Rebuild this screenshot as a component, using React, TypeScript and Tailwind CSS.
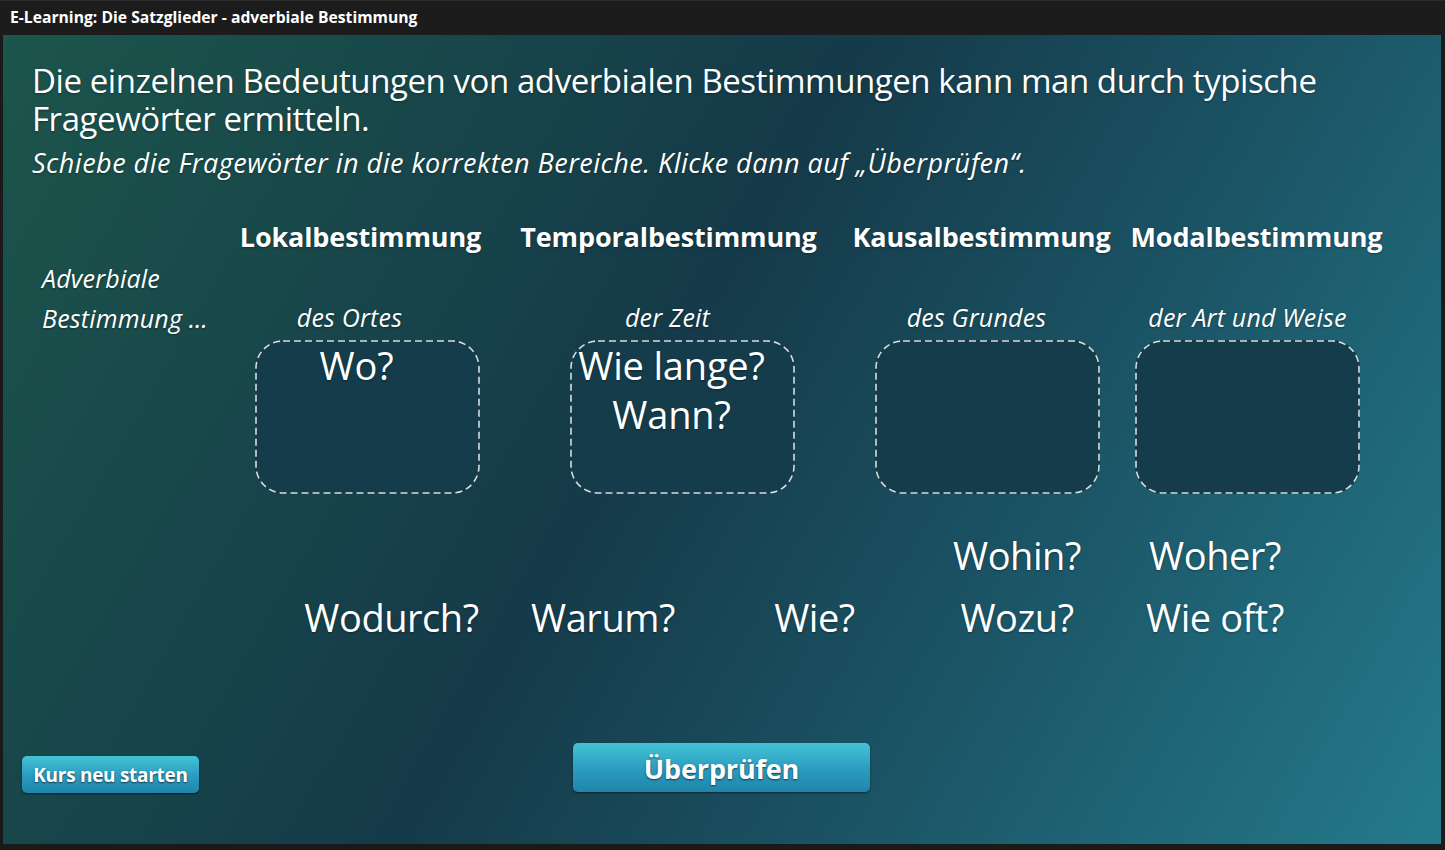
import React from 'react';

const columns = [
  { title: 'Lokalbestimmung', sub: 'des Ortes', words: ['Wo?'], hx: 'mr-[14px]', sx: 'mr-[36px]' },
  { title: 'Temporalbestimmung', sub: 'der Zeit', words: ['Wie lange?', 'Wann?'], hx: 'mr-[28px]', sx: 'mr-[30px]' },
  { title: 'Kausalbestimmung', sub: 'des Grundes', words: [], hx: 'mr-[12px]', sx: 'mr-[22px]' },
  { title: 'Modalbestimmung', sub: 'der Art und Weise', words: [], hx: 'ml-[18px]', sx: '' },
];

const looseTop = [
  { word: '', w: 'w-[207px]' },
  { word: '', w: 'w-[216px]' },
  { word: '', w: 'w-[207px]' },
  { word: 'Wohin?', w: 'w-[198px]' },
  { word: 'Woher?', w: 'w-[198px]' },
];

const looseBottom = [
  { word: 'Wodurch?', w: 'w-[207px]' },
  { word: 'Warum?', w: 'w-[216px]' },
  { word: 'Wie?', w: 'w-[207px]' },
  { word: 'Wozu?', w: 'w-[198px]' },
  { word: 'Wie oft?', w: 'w-[198px]' },
];

const font = "font-['Open_Sans','Noto_Sans',sans-serif]";
const shadow = '[text-shadow:0_1px_2px_rgba(0,0,0,0.35)]';

function WordRow({ items }: { items: { word: string; w: string }[] }) {
  return (
    <div className="flex pl-[285px] h-[62px] items-center">
      {items.map((it, i) => (
        <div key={i} className={`${it.w} text-center text-[38px] leading-[49px] tracking-[-0.012em] text-white ${shadow}`}>
          {it.word}
        </div>
      ))}
    </div>
  );
}

function DropBox({ words }: { words: string[] }) {
  return (
    <div className="relative mt-[8px] w-[225px] h-[154px] rounded-[28px] bg-[#143c4a] flex flex-col items-center pr-[22px] pt-[1px]">
      <svg className="absolute inset-0 pointer-events-none" width="225" height="154">
        <rect
          x="1"
          y="1"
          width="223"
          height="152"
          rx="27"
          fill="none"
          stroke="#d6dcdf"
          strokeWidth="1.6"
          strokeDasharray="7 4"
        />
      </svg>
      {words.map((w) => (
        <div key={w} className={`relative text-[38px] leading-[49px] tracking-[-0.005em] whitespace-nowrap ${shadow}`}>
          {w}
        </div>
      ))}
    </div>
  );
}

export default function App() {
  return (
    <div className={`w-[1445px] h-[850px] bg-[#1a1a1a] flex flex-col ${font} overflow-hidden`}>
      {/* Title bar */}
      <div className="h-[35px] shrink-0 flex items-center px-[10px] bg-[#1c1c1c] border-t border-[#2a2a2a]">
        <span className="text-[15.7px] font-bold text-white">
          E-Learning: Die Satzglieder - adverbiale Bestimmung
        </span>
      </div>

      {/* Stage */}
      <div className="mx-[3px] mr-[4px] mb-[6px] flex-1 flex flex-col bg-[linear-gradient(120deg,#1c554b_0%,#17434a_30%,#153a49_45%,#1b5566_70%,#247a8c_100%)] text-white">
        <div className="pl-[29px] pt-[27px] pr-[40px]">
          <h1 className={`text-[33px] leading-[38px] font-normal tracking-[-0.013em] ${shadow}`}>
            Die einzelnen Bedeutungen von adverbialen Bestimmungen kann man durch typische Fragewörter ermitteln.
          </h1>
          <p className={`mt-[9px] text-[27px] leading-[32px] italic tracking-[0.018em] ${shadow}`}>
            Schiebe die Fragewörter in die korrekten Bereiche. Klicke dann auf „Überprüfen“.
          </p>
        </div>

        {/* Categories */}
        <div className="flex mt-[41px]">
          <div className="w-[252px] shrink-0 pl-[39px] pt-[38px]">
            <div className={`text-[25px] leading-[40px] italic tracking-[0.008em] ${shadow}`}>Adverbiale</div>
            <div className={`text-[25px] leading-[40px] italic tracking-[0.008em] whitespace-nowrap ${shadow}`}>
              Bestimmung <span className="tracking-[0.12em]">…</span>
            </div>
          </div>
          <div className="flex">
            {columns.map((c, i) => (
              <div
                key={c.title}
                className={`w-[225px] flex flex-col items-center ${i === 1 ? 'ml-[90px]' : i === 2 ? 'ml-[80px]' : i === 3 ? 'ml-[35px]' : ''}`}
              >
                <div className={`h-[34px] leading-[34px] text-[27px] font-bold tracking-[-0.005em] whitespace-nowrap ${c.hx} ${shadow}`}>
                  {c.title}
                </div>
                <div className={`mt-[48px] h-[30px] leading-[30px] text-[25px] italic tracking-[0.008em] whitespace-nowrap ${c.sx} ${shadow}`}>
                  {c.sub}
                </div>
                <DropBox words={c.words} />
              </div>
            ))}
          </div>
        </div>

        {/* Loose question words */}
        <div className="mt-[30px]">
          <WordRow items={looseTop} />
          <WordRow items={looseBottom} />
        </div>

        {/* Buttons */}
        <div className="flex-1 flex items-start pt-[95px] pl-[19px]">
          <button className="mt-[13px] w-[177px] h-[37px] pt-[2px] rounded-[5px] bg-[linear-gradient(180deg,#43c4d6_0%,#2a9bbf_55%,#1f85aa_100%)] shadow-[0_1px_2px_rgba(0,0,0,0.5)] text-white text-[19px] font-bold tracking-[-0.015em] [text-shadow:0_1px_2px_rgba(0,0,0,0.6)]">
            Kurs neu starten
          </button>
          <button className="ml-[374px] w-[297px] h-[49px] pt-[3px] rounded-[5px] bg-[linear-gradient(180deg,#43c4d6_0%,#2a9bbf_55%,#1f85aa_100%)] shadow-[0_1px_2px_rgba(0,0,0,0.5)] text-white text-[27px] font-bold tracking-[-0.006em] [text-shadow:0_1px_2px_rgba(0,0,0,0.6)]">
            Überprüfen
          </button>
        </div>
      </div>
    </div>
  );
}
